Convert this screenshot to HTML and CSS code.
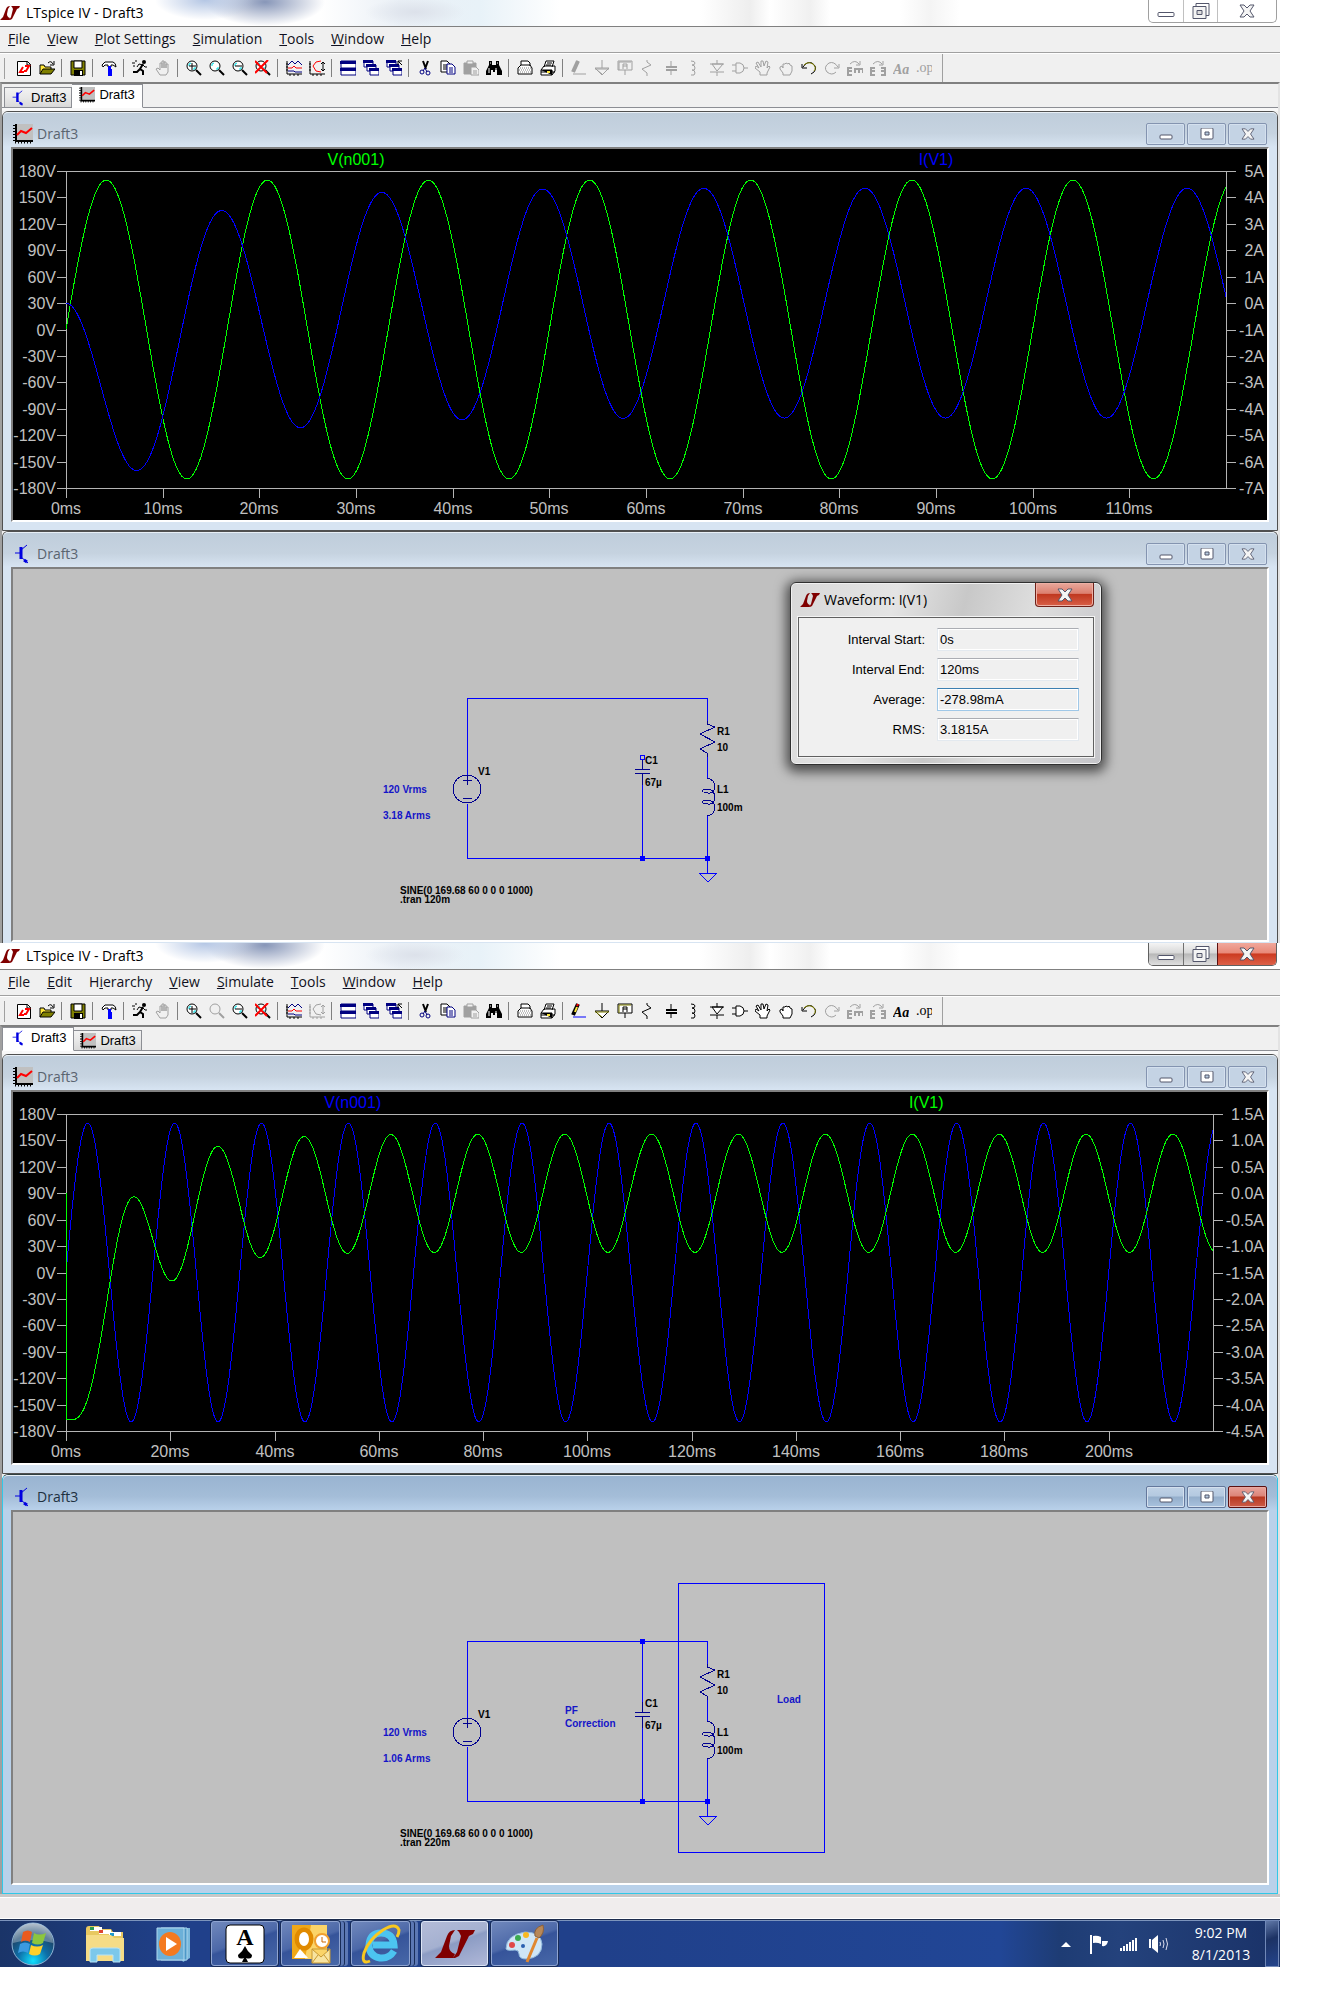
FILE: index.html
```html
<!DOCTYPE html>
<html lang="en">
<head>
    <meta charset="UTF-8">
    <meta name="viewport" content="width=device-width, initial-scale=1.0">
    <title>LTspice IV - Draft3</title>
    <link rel="stylesheet" href="styles.css">
</head>
<body>
    <!-- Shared icons -->
    <svg class="defs" aria-hidden="true">
        <symbol id="lt" viewBox="0 0 20 14"><path fill="#800000" d="M0 14l3-3 3-8q1-3 4-3L8 3 7 8q0 3 3 4l-1 2zM11 0h9l-1 2-2 1-3 6-2 4-2 1h-1l2-3 1-4 1-4-1-2z"/></symbol>
        <symbol id="bjt" viewBox="0 0 20 20"><path fill="none" stroke="#0000e0" stroke-width="1" d="M2 9h5M8 13l7 6M8 6l6-5"/><path fill="none" stroke="#0000e0" stroke-width="3" d="M8 3v12M11 16l3 2"/></symbol>
        <symbol id="wave" viewBox="0 0 20 20"><path fill="#c0c0c0" d="M3 0h17v16H3z"/><path stroke="#000" stroke-width="2" d="M3 0v17M2 17h18"/><path stroke="#000" stroke-width="3" stroke-dasharray="1 2" d="M1 1v18M2 18h18"/><path fill="none" stroke="#f00" stroke-width="2" d="M4 11l4-4 5 2 6-5"/></symbol>
        <symbol id="min" viewBox="0 0 18 16"><rect x="1" y="10" width="16" height="4" rx="1" fill="#fff" stroke="#53566b"/></symbol>
        <symbol id="restore" viewBox="0 0 18 16"><path fill="#fff" stroke="#53566b" d="M4 1h13v12H4z"/><path fill="#f4f4f4" stroke="#53566b" d="M1 4h13v12H1z"/><path fill="#ddd" stroke="#53566b" d="M5 8h5v4H5z"/></symbol>
        <symbol id="cmin" viewBox="0 0 14 12"><rect x="1" y="7" width="12" height="4" rx="1" fill="#fff" stroke="#53566b"/></symbol>
        <symbol id="cmax" viewBox="0 0 14 12"><rect x="1" y="0" width="12" height="11" rx="1" fill="#fff" stroke="#53566b"/><path fill="#b8cce0" stroke="#53566b" d="M5 4h4v3H5z"/></symbol>
        <symbol id="close" viewBox="0 0 16 14"><path fill="#f4f4f4" stroke="#53566b" stroke-linejoin="round" d="M1 1h4l3 3 3-3h4l-4 6 4 6h-4l-3-3-3 3H1l4-6z"/></symbol>

        <!-- Toolbar -->
        <symbol id="t-new" viewBox="0 0 16 16"><path fill="var(--paper)" stroke="var(--ink)" d="M1.500 1.500h10l3 3v11h-13z"/><path fill="none" stroke="var(--ink)" d="M11 1v4h4"/><path fill="none" stroke="var(--red)" stroke-width="2" d="M7 7L4 12h4M9 6h4l-3 5H8"/></symbol>
        <symbol id="t-open" viewBox="0 0 16 16"><path fill="var(--yellow)" stroke="var(--ink)" d="M1 14V5h4l1 2h6v3"/><path fill="var(--olive)" stroke="var(--ink)" d="M1 14l3-5h12l-4 5z"/><path fill="none" stroke="var(--ink)" d="M9 3q3-3 5 1M15 1v4h-4"/></symbol>
        <symbol id="t-save" viewBox="0 0 16 16"><path fill="var(--olive)" stroke="var(--ink)" d="M1 1h14v14H1z"/><path fill="var(--paper)" stroke="var(--ink)" d="M4 1h8v7H4z"/><path fill="var(--ink)" d="M4 10h9v6H4z"/><path fill="var(--paper)" d="M10 11h2v4h-2z"/></symbol>
        <symbol id="t-hammer" viewBox="0 0 16 16"><path fill="var(--paper)" stroke="var(--ink)" d="M1 5l3-3h8q3 1 3 5l-3-2h-2v2H7V5H4L2 7z"/><path fill="var(--blue)" d="M7 6h3v3h1v7H7z"/></symbol>
        <symbol id="t-run" viewBox="0 0 16 16"><circle cx="12" cy="2" r="2" fill="var(--ink)"/><path fill="none" stroke="var(--ink)" stroke-width="2" d="M11 4L8 9l3 2v4M8 9l-3 3H1"/><path fill="none" stroke="var(--ink)" d="M5 7l2-3 4 1 2 2h2M0 3h3M1 6h2M3 1h2"/></symbol>
        <symbol id="t-hand" viewBox="0 0 16 16"><path fill="var(--paper)" stroke="var(--ink)" d="M5 15l-4-6 2-1 2 2V3h2v5V1h2v7V2h2v6V4h2v8l-2 3z"/></symbol>
        <symbol id="lens" viewBox="0 0 16 16"><circle cx="6" cy="6" r="5" fill="var(--paper)" stroke="var(--ink)"/><path fill="none" stroke="var(--cyan)" d="M3 6V4l2-1M7 9h2V7"/><path stroke="var(--ink)" stroke-width="2" d="M10 10l5 5"/></symbol>
        <symbol id="t-zoomin" viewBox="0 0 16 16"><use href="#lens"/><path stroke="var(--ink)" d="M3 6h7M6 3v7"/></symbol>
        <symbol id="t-pan" viewBox="0 0 16 16"><use href="#lens"/></symbol>
        <symbol id="t-zoomout" viewBox="0 0 16 16"><use href="#lens"/><path stroke="var(--ink)" d="M3 6h7"/></symbol>
        <symbol id="t-zoomfit" viewBox="0 0 16 16"><use href="#lens"/><path stroke="var(--red)" stroke-width="2" d="M0 1l12 12M13 0L0 13"/></symbol>
        <symbol id="t-plot" viewBox="0 0 16 16"><path fill="none" stroke="var(--ink)" d="M1 1v13h15M0 4h2M0 7h2M0 10h2M4 14v2M8 14v2M12 14v2"/><path fill="none" stroke="var(--navy)" d="M2 5l4-4 3 3 3-3 4 4M2 11h6l1 1h7"/><path fill="none" stroke="var(--red)" d="M2 8h4l2-2 2 2h6"/></symbol>
        <symbol id="t-auto" viewBox="0 0 16 16"><path fill="none" stroke="var(--ink)" d="M1 1v13h15M0 4h2M0 7h2M0 10h2M4 14v2M8 14v2M12 14v2M14 2v9M12 4l2-2 2 2M12 9l2 2 2-2"/><path fill="none" stroke="var(--red)" d="M12 1L7 2 4 6l3 5 5 1"/></symbol>
        <symbol id="t-tile" viewBox="0 0 16 16"><path fill="var(--paper)" stroke="var(--navy)" d="M1 1h15v14H1zM1 8h15"/><path fill="var(--navy)" d="M0 1h16v3H0zM0 8h16v3H0z"/></symbol>
        <symbol id="win" viewBox="0 0 16 16"><path fill="var(--paper)" stroke="var(--navy)" d="M1 1h9v6H1z"/><path fill="var(--navy)" d="M0 0h10v3H0z"/></symbol>
        <symbol id="t-cascade" viewBox="0 0 16 16"><use href="#win" width="16" height="16"/><use href="#win" x="3" y="4" width="16" height="16"/><use href="#win" x="6" y="8" width="16" height="16"/></symbol>
        <symbol id="t-closeall" viewBox="0 0 16 16"><use href="#t-cascade"/><path fill="none" stroke="var(--ink)" d="M12 5V1h4M12 1l4 4"/></symbol>
        <symbol id="t-cut" viewBox="0 0 16 16"><path stroke="var(--ink)" stroke-width="2" d="M6 1l3 8M11 1L8 9"/><circle cx="5" cy="12" r="2" fill="none" stroke="var(--navy)"/><circle cx="11" cy="13" r="2" fill="none" stroke="var(--navy)"/><path stroke="var(--navy)" d="M8 8l-2 3M8 8l2 4"/></symbol>
        <symbol id="t-copy" viewBox="0 0 16 16"><path fill="var(--paper)" stroke="var(--ink)" d="M1 1h6l3 3v8H1zM3 5h4M3 7h4M3 9h4"/><path fill="var(--paper)" stroke="var(--navy)" d="M7 4h5l3 3v7H7zM9 8h4M9 10h4M9 12h4"/></symbol>
        <symbol id="t-paste" viewBox="0 0 16 16"><path fill="var(--olive)" stroke="var(--ink)" d="M1 3h12v11H1z"/><path fill="var(--paper)" stroke="var(--ink)" d="M4 1h6v3H4zM8 7h5l3 3v5H8zM10 11h4M10 13h4"/></symbol>
        <symbol id="t-find" viewBox="0 0 16 16"><path fill="var(--ink)" d="M3 1h3v4h4V1h3v4l3 6v4h-5v-5H9v2H7v-2H5v5H0v-4l3-6z"/><path stroke="var(--paper)" d="M3 8v5M10 8v2M4 3h1M11 3h1"/></symbol>
        <symbol id="t-setup" viewBox="0 0 16 16"><path fill="var(--paper)" stroke="var(--ink)" d="M4 5V1h7l2 2v3M1 8l3-3h9l2 3v6H1z"/><path stroke="var(--grey)" stroke-dasharray="1 1" d="M3 8h11M2 10h12M3 12h11"/></symbol>
        <symbol id="t-print" viewBox="0 0 16 16"><path fill="var(--paper)" stroke="var(--ink)" d="M4 7l2-6h8l-2 6M7 3h5M6 5h5M1 10l3-4h11v5l-3 4H1z"/><path stroke="var(--ink)" d="M1 10h11v5M1 12h14"/><path stroke="var(--yellow)" stroke-width="2" d="M7 12h3"/></symbol>
        <symbol id="t-wire" viewBox="0 0 16 16"><path stroke="var(--ink)" stroke-width="4" d="M7 1L2 12"/><path stroke="var(--yellow)" stroke-width="2" d="M6 4L4 9"/><path stroke="var(--red)" stroke-width="2" d="M7 1l-1 2"/><path stroke="var(--wire)" d="M2 14h13"/></symbol>
        <symbol id="t-gnd" viewBox="0 0 16 16"><path fill="var(--paper)" stroke="var(--ink)" d="M8 0v8M1 8h14l-7 7z"/><path stroke="var(--olive)" d="M1 9h14M3 10l5 4"/></symbol>
        <symbol id="t-label" viewBox="0 0 16 16"><path fill="var(--paper)" stroke="var(--ink)" d="M1 1h14v9H1zM8 10v5"/><path fill="none" stroke="var(--ink)" stroke-width="1" d="M6 9V4h4v5M6 6h4"/><path stroke="var(--olive)" d="M2 2h12M2 2v8"/></symbol>
        <symbol id="t-res" viewBox="0 0 16 16"><path fill="none" stroke="var(--ink)" d="M7 0v2l4 3-9 4 5 4v3"/></symbol>
        <symbol id="t-cap" viewBox="0 0 16 16"><path stroke="var(--ink)" stroke-width="1" d="M8 1v6M8 10v5"/><path stroke="var(--ink)" stroke-width="2" d="M3 7h11M3 10h11"/></symbol>
        <symbol id="t-ind" viewBox="0 0 16 16"><path fill="none" stroke="var(--ink)" d="M5 1q4 0 4 2t-3 2q3 0 3 3t-3 2q3 0 3 3t-4 2"/></symbol>
        <symbol id="t-diode" viewBox="0 0 16 16"><path fill="var(--paper)" stroke="var(--ink)" d="M8 0v4M1 4h14M3 4h11l-6 7zM1 12h14M8 12v4"/></symbol>
        <symbol id="t-gate" viewBox="0 0 16 16"><path fill="var(--paper)" stroke="var(--ink)" d="M4 3h4q4 1 4 5t-4 5H4zM0 5h4M0 11h4M12 8h4"/></symbol>
        <symbol id="t-move" viewBox="0 0 16 16"><path fill="var(--paper)" stroke="var(--ink)" d="M5 15v-3L0 8l1-2 3 2-3-5 2-1 3 5V1h2l1 5 2-5 2 1-1 6 2-2 1 1-3 6v2z"/></symbol>
        <symbol id="t-drag" viewBox="0 0 16 16"><path fill="var(--paper)" stroke="var(--ink)" d="M5 15v-2L2 9V7l2-1 1 2V4h2l1-1 2 1 1-1 1 2 2 1v5l-2 4z"/></symbol>
        <symbol id="t-undo" viewBox="0 0 16 16"><path fill="none" stroke="var(--ink)" d="M1 4v4h5M2 7q4-6 9-4 6 4 2 9l-3 2"/><path fill="none" stroke="var(--olive)" d="M3 5q4-4 9-1 4 4 1 7"/></symbol>
        <symbol id="t-redo" viewBox="0 0 16 16"><path fill="none" stroke="var(--ink)" d="M15 4v4h-5M14 7Q10 1 5 3q-6 4-2 9 5 4 9 0"/></symbol>
        <symbol id="t-rotate" viewBox="0 0 16 16"><path fill="none" stroke="var(--ink)" stroke-width="1" d="M3 4q5-5 9 0M13 1v4H9"/><path fill="none" stroke="var(--ink)" stroke-width="2" d="M5 8H1v7h4M1 11h4M8 13V9h8v4M12 9v4"/></symbol>
        <symbol id="t-mirror" viewBox="0 0 16 16"><path fill="none" stroke="var(--ink)" stroke-width="1" d="M3 4q5-5 9 0M13 1v4H9"/><path fill="none" stroke="var(--ink)" stroke-width="2" d="M5 8H1v7h4M1 11h4M11 8h4v7h-4M15 11h-4"/></symbol>

        <!-- Circuit parts that both drafts share -->
        <g id="circuit">
            <path class="wire" d="M454 206V129H694V155M454 235V289H694V247M694 188V209M629 215V289M694 289V304M686 304H704L695 313Z"/>
            <path class="junction" d="M627 287h5v5h-5zM692 287h5v5h-5z"/>
            <path class="part" d="M450 211h9M454 206v10M450 229h9"/>
            <path class="part" d="M622 200h15M622 204h15M629 190v10M629 204v12"/>
            <path class="part" d="M694 152v3l8 3-15 7 15 8-15 7 7 4v4"/>
            <circle class="part" cx="454" cy="220" r="14"/>
            <path class="part" d="M694 209Q702 211 702 218Q701 225 695 224Q689 223 689 222Q690 220 696 220Q702 222 702 229Q701 236 695 235Q689 235 689 233Q690 231 696 231Q702 233 702 239Q701 246 694 247"/>
        </g>
    </svg>

    <main class="desktop">
        <section class="app">
            <header class="titlebar">
                <svg class="app-icon"><use href="#lt"/></svg>
                <h1>LTspice IV - Draft3</h1>
                <div class="caption">
                    <button aria-label="Minimize"><svg><use href="#min"/></svg></button>
                    <button aria-label="Restore"><svg><use href="#restore"/></svg></button>
                    <button class="close" aria-label="Close"><svg><use href="#close"/></svg></button>
                </div>
            </header>
            <nav class="menubar">
                <button><u>F</u>ile</button>
                <button><u>V</u>iew</button>
                <button><u>P</u>lot Settings</button>
                <button><u>S</u>imulation</button>
                <button><u>T</u>ools</button>
                <button><u>W</u>indow</button>
                <button><u>H</u>elp</button>
            </nav>
            <div class="toolbar" data-disabled="hand paste wire gnd label res cap ind diode gate move drag redo rotate mirror text op"></div>
            <div class="mdi">
                <div class="tabs">
                    <button class="tab"><svg><use href="#bjt"/></svg>Draft3</button>
                    <button class="tab current"><svg><use href="#wave"/></svg>Draft3</button>
                </div>
                <article class="child">
                    <header class="child-title">
                        <svg class="child-icon"><use href="#wave"/></svg>
                        <h2>Draft3</h2>
                        <div class="child-caption">
                            <button aria-label="Minimize"><svg><use href="#cmin"/></svg></button>
                            <button aria-label="Maximize"><svg><use href="#cmax"/></svg></button>
                            <button aria-label="Close"><svg><use href="#close"/></svg></button>
                        </div>
                    </header>
                    <div class="pane"><svg class="plot" id="plot1"></svg></div>
                </article>
                <article class="child cut">
                    <header class="child-title">
                        <svg class="child-icon"><use href="#bjt"/></svg>
                        <h2>Draft3</h2>
                        <div class="child-caption">
                            <button aria-label="Minimize"><svg><use href="#cmin"/></svg></button>
                            <button aria-label="Maximize"><svg><use href="#cmax"/></svg></button>
                            <button aria-label="Close"><svg><use href="#close"/></svg></button>
                        </div>
                    </header>
                    <div class="pane">
                        <svg class="schematic">
                            <use href="#circuit"/>
                            <path class="wire" d="M627 186h4v4h-4z"/>
                            <text x="465" y="206">V1</text>
                            <text x="704" y="166">R1</text>
                            <text x="704" y="182">10</text>
                            <text x="632" y="195">C1</text>
                            <text x="632" y="217">67µ</text>
                            <text x="704" y="224">L1</text>
                            <text x="704" y="242">100m</text>
                            <text x="387" y="325">SINE(0 169.68 60 0 0 0 1000)</text>
                            <text x="387" y="334">.tran 120m</text>
                            <text class="note" x="370" y="224">120 Vrms</text>
                            <text class="note" x="370" y="250">3.18 Arms</text>
                        </svg>
                        <form class="dialog">
                            <div class="dialog-title">
                                <svg class="app-icon"><use href="#lt"/></svg>
                                <h3>Waveform: I(V1)</h3>
                                <button type="button" class="dialog-close" aria-label="Close"><svg><use href="#close"/></svg></button>
                            </div>
                            <div class="fields">
                                <label for="start">Interval Start:</label>
                                <input id="start" value="0s" readonly>
                                <label for="end">Interval End:</label>
                                <input id="end" value="120ms" readonly>
                                <label for="average">Average:</label>
                                <input id="average" class="hot" value="-278.98mA" readonly>
                                <label for="rms">RMS:</label>
                                <input id="rms" value="3.1815A" readonly>
                            </div>
                        </form>
                    </div>
                </article>
            </div>
        </section>

        <section class="app focused">
            <header class="titlebar">
                <svg class="app-icon"><use href="#lt"/></svg>
                <h1>LTspice IV - Draft3</h1>
                <div class="caption">
                    <button aria-label="Minimize"><svg><use href="#min"/></svg></button>
                    <button aria-label="Restore"><svg><use href="#restore"/></svg></button>
                    <button class="close" aria-label="Close"><svg><use href="#close"/></svg></button>
                </div>
            </header>
            <nav class="menubar">
                <button><u>F</u>ile</button>
                <button><u>E</u>dit</button>
                <button>H<u>i</u>erarchy</button>
                <button><u>V</u>iew</button>
                <button><u>S</u>imulate</button>
                <button><u>T</u>ools</button>
                <button><u>W</u>indow</button>
                <button><u>H</u>elp</button>
            </nav>
            <div class="toolbar" data-disabled="hand pan auto paste redo rotate mirror"></div>
            <div class="mdi">
                <div class="tabs">
                    <button class="tab current"><svg><use href="#bjt"/></svg>Draft3</button>
                    <button class="tab"><svg><use href="#wave"/></svg>Draft3</button>
                </div>
                <article class="child">
                    <header class="child-title">
                        <svg class="child-icon"><use href="#wave"/></svg>
                        <h2>Draft3</h2>
                        <div class="child-caption">
                            <button aria-label="Minimize"><svg><use href="#cmin"/></svg></button>
                            <button aria-label="Maximize"><svg><use href="#cmax"/></svg></button>
                            <button aria-label="Close"><svg><use href="#close"/></svg></button>
                        </div>
                    </header>
                    <div class="pane"><svg class="plot" id="plot2"></svg></div>
                </article>
                <article class="child active">
                    <header class="child-title">
                        <svg class="child-icon"><use href="#bjt"/></svg>
                        <h2>Draft3</h2>
                        <div class="child-caption">
                            <button aria-label="Minimize"><svg><use href="#cmin"/></svg></button>
                            <button aria-label="Maximize"><svg><use href="#cmax"/></svg></button>
                            <button class="close" aria-label="Close"><svg><use href="#close"/></svg></button>
                        </div>
                    </header>
                    <div class="pane">
                        <svg class="schematic">
                            <use href="#circuit"/>
                            <path class="wire" d="M629 129v61M665 71h146v269H665z"/>
                            <path class="junction" d="M627 127h5v5h-5z"/>
                            <text x="465" y="206">V1</text>
                            <text x="704" y="166">R1</text>
                            <text x="704" y="182">10</text>
                            <text x="632" y="195">C1</text>
                            <text x="632" y="217">67µ</text>
                            <text x="704" y="224">L1</text>
                            <text x="704" y="242">100m</text>
                            <text x="387" y="325">SINE(0 169.68 60 0 0 0 1000)</text>
                            <text x="387" y="334">.tran 220m</text>
                            <text class="note" x="370" y="224">120 Vrms</text>
                            <text class="note" x="370" y="250">1.06 Arms</text>
                            <text class="note" x="552" y="202">PF</text>
                            <text class="note" x="552" y="215">Correction</text>
                            <text class="note" x="764" y="191">Load</text>
                        </svg>
                    </div>
                </article>
            </div>
            <footer class="statusbar"></footer>
        </section>

        <footer class="taskbar">
            <button class="start" aria-label="Start">
                <svg viewBox="0 0 44 44">
                    <defs>
                        <radialGradient id="orb" cx="50%" cy="90%" r="90%"><stop offset="0" stop-color="#12e0ff"/><stop offset="0.400" stop-color="#0d6fa8"/><stop offset="0.700" stop-color="#1c4a70"/><stop offset="1" stop-color="#9ab"/></radialGradient>
                    </defs>
                    <circle cx="22" cy="22" r="21" fill="url(#orb)" stroke="#8fb4d4"/>
                    <path fill="#fff" opacity="0.300" d="M2 21a20 20 0 0 1 40 0q-20-6-40 0z"/>
                    <path fill="#ea5a1e" d="M12 10q5-3 9 0l-2 10q-5-3-9 0z"/>
                    <path fill="#8cc63e" d="M23 11q5 3 12 0l-3 10q-5 3-11 0z"/>
                    <path fill="#3a9ae0" d="M9 22q5-3 10 0l-2 9q-5-3-10 0z"/>
                    <path fill="#ffd02a" d="M20 23q6 3 12 0l-3 9q-5 3-11 0z"/>
                </svg>
            </button>
            <button class="task plain" aria-label="Windows Explorer">
                <svg viewBox="0 0 40 40">
                    <path fill="#e8c860" d="M1 5q0-3 3-3h10l2 3h10l2 3h10v28H1z"/>
                    <path fill="#fff" d="M5 3h12v4H5zM14 6h12v4H14zM24 8h12v4H24z"/>
                    <path fill="#2a9a50" d="M5 3h4v3H5z"/><path fill="#d43" d="M14 6h4v3h-4z"/><path fill="#29c" d="M25 9h4v3h-4z"/>
                    <path fill="#f5dc86" d="M1 11h25l3 3h10v23H1z"/>
                    <path fill="#7cc8ea" stroke="#b8e4f6" d="M5 38V26q0-2 3-2h24q3 0 3 2v12h-7v-7H12v7z"/>
                </svg>
            </button>
            <button class="task plain" aria-label="Windows Media Player">
                <svg viewBox="0 0 40 40">
                    <path fill="#7ab8dc" d="M10 4h25v30l-7 4z"/><path fill="#4d98c8" stroke="#a8d4ec" d="M6 4h26v32H6z"/>
                    <path fill="#6cb0d8" stroke="#b0d8ee" d="M2 4h27v32H2z"/>
                    <ellipse cx="15" cy="20" rx="11" ry="12" fill="#f47a20"/><path fill="#fff" d="M11 13l11 7-11 7z"/>
                </svg>
            </button>
            <button class="task" aria-label="Solitaire">
                <svg viewBox="0 0 40 40">
                    <rect x="1" y="1" width="38" height="38" rx="4" fill="#fff" stroke="#000"/>
                    <text class="card" x="20" y="21">A</text>
                    <path d="M20 22q2 5 7 9 0 5-6 3l2 4h-6l2-4q-6 2-6-3 5-4 7-9z"/>
                </svg>
            </button>
            <button class="task stacked" aria-label="Outlook">
                <svg viewBox="0 0 40 40">
                    <path fill="#f0a818" d="M1 1h35v34H1z"/><path fill="#fbd468" d="M20 1h16v34H14z"/>
                    <ellipse cx="13" cy="15" rx="7" ry="9" fill="none" stroke="#e08a00" stroke-width="5"/><ellipse cx="13" cy="15" rx="5" ry="7" fill="#fff"/>
                    <path fill="#fff" d="M3 34l6-9 8 9z"/>
                    <circle cx="31" cy="17" r="7" fill="#fff" stroke="#f0a030" stroke-width="2"/><path fill="none" stroke="#c60" d="M31 13v5h4"/>
                    <path fill="#f8e4a0" stroke="#c89830" d="M21 25h18v14H21zM21 25l9 8 9-8M21 39l6-8M39 39l-6-8"/>
                </svg>
            </button>
            <button class="task stacked" aria-label="Internet Explorer">
                <svg viewBox="0 0 40 40">
                    <path fill="none" stroke="#4cc4f0" stroke-width="7" d="M33 27Q28 35 19 34 8 32 8 21 9 9 20 9 32 9 33 21H12"/>
                    <path fill="none" stroke="#f8c820" stroke-width="3" d="M9 37Q0 41 3 29 8 15 22 6 35-2 38 6q0 4-2 7"/>
                </svg>
            </button>
            <button class="task current" aria-label="LTspice IV">
                <svg class="lt-big"><use href="#lt"/></svg>
            </button>
            <button class="task" aria-label="Paint">
                <svg viewBox="0 0 40 40">
                    <path fill="#cfe6f6" stroke="#8fb8dc" d="M20 8Q36 8 37 20q0 14-16 15-7 0-7-5 0-4-4-4-8 1-9-1 0-14 19-17z"/>
                    <circle cx="7" cy="21" r="3" fill="#e04848"/><circle cx="13" cy="14" r="3" fill="#3aaa50"/><circle cx="21" cy="11" r="3" fill="#f8b820"/><circle cx="18" cy="22" r="2" fill="#2a60b0"/>
                    <path stroke="#e08830" stroke-width="3" d="M32 14L22 38"/><path fill="#b88858" stroke="#8c6038" d="M30 12q-2-8 8-11 2 8-4 13z"/>
                </svg>
            </button>
            <div class="tray">
                <svg class="tray-icon arrow" viewBox="0 0 20 20"><path fill="#fff" d="M5 13l5-5 5 5z"/></svg>
                <svg class="tray-icon" viewBox="0 0 20 20"><path fill="#fff" d="M1 1h2v19H1zM4 2q4-1 8 1v7q-4-2-8-1zM13 7h6q-1 6-6 5z"/></svg>
                <svg class="tray-icon" viewBox="0 0 20 20"><path fill="#fff" d="M1 14h2v3H1zM4 12h2v5H4zM7 10h2v7H7zM10 8h2v9h-2zM13 6h2v11h-2zM16 4h2v13h-2z"/></svg>
                <svg class="tray-icon" viewBox="0 0 20 20"><path fill="#fff" d="M0 5h2v9H0zM3 6l6-5v18l-6-5z"/><path fill="none" stroke="#dde" d="M11 8q1 2 0 4M14 6q2 4 0 8M17 4q3 6 0 12"/></svg>
                <div class="clock"><span>9:02 PM</span><span>8/1/2013</span></div>
            </div>
            <button class="show-desktop" aria-label="Show desktop"></button>
        </footer>
    </main>

    <script src="app.js"></script>
</body>
</html>
```
FILE: styles.css
```css
* {
    margin: 0;
    padding: 0;
    box-sizing: border-box;
}

body {
    font-family: 'Open Sans', 'Noto Sans', sans-serif;
    font-size: 14px;
    line-height: 20px;
    color: #000;
    background: #fff;
}

button {
    font: inherit;
    color: inherit;
    background: none;
    border: none;
}

h1,
h2,
h3 {
    font-size: 14px;
    font-weight: normal;
}

svg {
    display: block;
    flex: none;
}

.defs {
    position: absolute;
    width: 0;
    height: 0;
}

.desktop {
    margin-right: 48px;
}

/* Main window */
.titlebar {
    display: flex;
    height: 27px;
    border-bottom: 1px solid #808080;
    background:
        radial-gradient(ellipse 50px 20px at 205px 0, #b4c6e4, transparent),
        radial-gradient(ellipse 60px 24px at 265px 2px, #8796b8, transparent),
        radial-gradient(ellipse 50px 14px at 415px 12px, #dce1ea, transparent),
        linear-gradient(to right, #fff 0, #fff 320px, #eaf0f6 400px, #e8f2f8 480px, #fff 560px, #fff 700px, #eee 750px, #fff 770px, #f0f0f0 810px, #fff 830px, #fff 900px, #f4f4f4 930px, #fff 960px, #fff);
}

.app-icon {
    width: 20px;
    height: 14px;
}

.titlebar .app-icon {
    margin-top: 6px;
}

.titlebar h1 {
    margin: 3px auto 0 6px;
}

.caption {
    display: flex;
    height: 23px;
    margin-right: 3px;
    border: 1px solid #a0a0a0;
    border-top: none;
    border-radius: 0 0 5px 5px;
    overflow: hidden;
}

.caption button {
    display: flex;
    justify-content: center;
    width: 34px;
    padding-top: 2px;
}

.caption button + button {
    border-left: 1px solid #c0c0c0;
}

.caption .close {
    width: 59px;
    padding-top: 4px;
}

.caption svg {
    width: 18px;
    height: 17px;
}

.caption .close svg {
    width: 16px;
    height: 14px;
}

.focused .caption {
    border-color: #606060;
}

.focused .caption button {
    background: linear-gradient(#f4f4f4, #d8d8d8 45%, #b8b8b8 50%, #dedede);
    border-color: #707070;
}

.focused .caption .close {
    background: linear-gradient(#f0a89c, #e88878 45%, #cc3a20 50%, #dc6048);
    border-color: #5c1010;
}

.menubar {
    display: flex;
    gap: 17px;
    height: 26px;
    padding: 0 8px 1px;
    background: #f0f0f0;
    border-bottom: 1px solid #a0a0a0;
}

.menubar button {
    color: #101020;
}

/* Toolbar */
.toolbar {
    --ink: #000;
    --paper: #fff;
    --red: #f00;
    --blue: #0000ff;
    --wire: #0000ff;
    --navy: #000080;
    --yellow: #ffe83c;
    --olive: #808000;
    --cyan: #00e0e8;
    --grey: #808080;
    display: flex;
    align-items: center;
    height: 29px;
    padding-left: 4px;
    background: #f0f0f0;
    border-top: 1px solid #fff;
}

.grip {
    width: 1px;
    height: 21px;
    margin-right: 7px;
    background: #a0a0a0;
}

.tool {
    display: flex;
    justify-content: center;
    width: 23px;
}

.tool svg {
    width: 16px;
    height: 16px;
}

.tool:disabled {
    --ink: #a0a0a0;
    --paper: #f0f0f0;
    --red: #a0a0a0;
    --blue: #a0a0a0;
    --wire: #a0a0a0;
    --navy: #a0a0a0;
    --yellow: #a0a0a0;
    --olive: #a0a0a0;
    --cyan: #f0f0f0;
}

.tool text {
    fill: var(--ink);
    font-family: 'Liberation Serif', serif;
    font-size: 14px;
}

.tool .italic {
    font-style: italic;
    font-weight: bold;
}

.sep {
    width: 1px;
    height: 18px;
    margin: 0 4px 0 3px;
    background: #808080;
}

.toolbar-end {
    align-self: stretch;
    width: 1px;
    margin-left: 7px;
    background: #a0a0a0;
}

/* Document area */
.mdi {
    border: 2px solid #a0a0a0;
    border-top-color: #808080;
    border-right-color: #e3e3e3;
    border-bottom: none;
    background: #f0f0f0;
}

.tabs {
    display: flex;
    align-items: flex-end;
    height: 27px;
    padding-left: 2px;
    border-bottom: 3px solid #f8f8f8;
    box-shadow: inset 0 -1px #8c8e94;
}

.tab {
    display: flex;
    align-items: center;
    gap: 4px;
    height: 21px;
    padding: 0 5px 0 6px;
    border: 1px solid #8c8e94;
    background: linear-gradient(#f2f2f2, #e8e8e8 50%, #d8d8d8);
    font-family: 'Liberation Sans', sans-serif;
    font-size: 13px;
}

.tab + .tab {
    border-left: none;
}

.tab svg {
    width: 16px;
    height: 16px;
}

.tab.current {
    height: 24px;
    padding: 0 7px 3px;
    background: #fff;
    border-bottom-color: #fff;
}

.focused .tabs {
    padding-left: 0;
}

.focused .tab.current {
    padding-left: 8px;
}

.child {
    padding: 0 8px 8px;
    border: 1px solid #505050;
    border-radius: 6px 6px 0 0;
    background: #d7e4f2;
}

.child-title {
    display: flex;
    align-items: center;
    gap: 4px;
    height: 35px;
    margin: 0 -8px;
    padding: 7px 10px 0;
    border-top: 1px solid #e8eff6;
    border-radius: 5px 5px 0 0;
    background: linear-gradient(#bfcddb, #c6d3e0 60%, #d7e4f2);
}

.child-icon {
    width: 20px;
    height: 20px;
}

.child-title h2 {
    margin-right: auto;
    color: #5a6470;
}

.child-caption {
    display: flex;
    gap: 2px;
}

.child-caption button {
    display: flex;
    align-items: center;
    justify-content: center;
    width: 39px;
    height: 22px;
    border: 1px solid #8494b0;
    border-radius: 2px;
    background: #c4d3e4;
    box-shadow: inset 0 0 0 1px #d4e0ee;
}

.child-caption svg {
    width: 14px;
    height: 12px;
}

.pane {
    position: relative;
    height: 375px;
    border: 2px solid;
    border-color: #808080 #fff #fff #808080;
    background: #c0c0c0;
}

.child.cut {
    padding-bottom: 1px;
    border-bottom: none;
}

.child.active {
    border-color: #30c8e8;
    border-top-color: #304040;
    box-shadow: 0 1px #000;
    background: #b9d1ea;
}

.active .child-title {
    background: linear-gradient(#99b4d1, #a4bdd8 60%, #b9d1ea);
}

.active .child-title h2 {
    color: #203040;
}

.active .child-caption button {
    border-color: #64789c;
    background: linear-gradient(#c0d2e6, #b4c9e0 45%, #94aecb 50%, #a8c2de);
}

.active .child-caption .close {
    border-color: #5c1010;
    background: linear-gradient(#e8a49c, #dc8478 45%, #b83820 50%, #cc5c48);
    box-shadow: inset 0 0 0 1px #e8a8a0;
}

/* Waveforms */
.plot {
    width: 100%;
    height: 100%;
    background: #000;
    font-family: 'Liberation Sans', sans-serif;
    font-size: 16px;
    shape-rendering: crispEdges;
}

.plot text {
    fill: #c0c0c0;
    text-anchor: middle;
}

.plot .left,
.plot .right {
    text-anchor: end;
}

.plot .axis {
    fill: none;
    stroke: #b4b4b4;
}

.plot .trace {
    fill: none;
}

.plot .green {
    stroke: #00ff00;
}

.plot .blue {
    stroke: #0000ff;
}

.plot text.green {
    fill: #00ff00;
    stroke: none;
}

.plot text.blue {
    fill: #0000ff;
    stroke: none;
}

/* Schematics */
.schematic {
    width: 100%;
    height: 100%;
    font-family: 'Liberation Sans', sans-serif;
    font-size: 10px;
    font-weight: bold;
}

.wire,
.part {
    fill: none;
    stroke: #0000ff;
    shape-rendering: crispEdges;
}

.part {
    stroke: #000090;
}

.junction {
    fill: #0000ff;
    shape-rendering: crispEdges;
}

.note {
    fill: #1414c8;
}

/* Waveform summary, floats over the schematic */
.dialog {
    position: absolute;
    left: 777px;
    top: 13px;
    width: 312px;
    padding: 0 7px 7px;
    border: 1px solid #303030;
    border-radius: 6px;
    background: linear-gradient(105deg, #d8d8d8, #e4e4e4 30%, #c8c8c8 50%, #dedede 70%, #c4c4c8);
    box-shadow: inset 0 0 0 1px #f0f0f0, 0 3px 12px 4px rgba(0, 0, 0, 0.6);
}

.dialog-title {
    display: flex;
    align-items: center;
    gap: 4px;
    height: 34px;
    padding-left: 2px;
}

.dialog-title h3 {
    margin-right: auto;
}

.dialog-close {
    display: flex;
    align-self: flex-start;
    align-items: center;
    justify-content: center;
    width: 59px;
    height: 24px;
    border: 1px solid #702018;
    border-top: none;
    border-radius: 0 0 4px 4px;
    background: linear-gradient(#e8a89c, #dc8070 45%, #c03820 50%, #d86048);
    box-shadow: inset 0 0 0 1px #eeb0a4;
}

.dialog-close svg {
    width: 16px;
    height: 14px;
}

.fields {
    display: grid;
    grid-template-columns: 126px 142px;
    gap: 7px 12px;
    padding: 10px 0 15px;
    border: 1px solid #606060;
    background: #f0f0f0;
    box-shadow: 0 0 0 1px #f4f4f4;
    font-family: 'Liberation Sans', sans-serif;
    font-size: 13px;
}

.fields label {
    padding-top: 2px;
    text-align: right;
}

.fields input {
    width: 142px;
    height: 23px;
    padding: 0 2px 1px;
    border: 1px solid #e3e9ef;
    border-top-color: #abadb3;
    background: #f0f0f0;
    box-shadow: inset 0 0 0 1px #fff;
    font: inherit;
}

.fields .hot {
    border-color: #a0c8e8;
    border-top-color: #3c7fb1;
}

.statusbar {
    height: 25px;
    border-top: 3px solid #c8c8c8;
    border-bottom: 1px solid #fff;
    background: #f0eded;
    box-shadow: inset 0 1px #fff;
}

/* Taskbar */
.taskbar {
    display: flex;
    height: 48px;
    padding-right: 1px;
    border-top: 1px solid #1c2c4c;
    box-shadow: inset 0 1px #7c94bc;
    background: linear-gradient(to right, #1a3468, #20408a 180px, #20408a 600px, #214696 1000px, #1e3c74 1060px, #24427c 1120px, #1a3268);
}

.taskbar button {
    display: flex;
    align-items: center;
    justify-content: center;
}

.start {
    width: 66px;
}

.start svg {
    width: 44px;
    height: 44px;
}

.task {
    position: relative;
    width: 67px;
    margin: 1px 3px 1px 0;
    border: 1px solid #8fa4d0;
    border-radius: 3px;
    background: linear-gradient(160deg, #7088bc, #4c68a8 45%, #36549a 50%, #4868a8);
    box-shadow: 0 0 0 1px #182c58;
}

.task svg {
    width: 40px;
    height: 40px;
}

.task.plain {
    border-color: transparent;
    background: none;
    box-shadow: none;
}

.start + .task {
    margin-left: 5px;
}

.task.stacked {
    width: 59px;
    margin-right: 11px;
    box-shadow: 0 0 0 1px #182c58, 4px 0 #5c78b4, 5px 0 #182c58, 8px 0 #5c78b4;
}

.task.current {
    border-color: #dce4f4;
    background: linear-gradient(160deg, #b4bcd8, #a4b0d0 45%, #8c9cc4 50%, #b0b8d8);
}

.task .lt-big {
    width: 40px;
    height: 28px;
}

.card {
    font-family: 'Liberation Serif', serif;
    font-size: 24px;
    font-weight: bold;
    text-anchor: middle;
}

.tray {
    display: flex;
    align-items: center;
    gap: 10px;
    margin-left: auto;
}

.tray-icon {
    width: 20px;
    height: 20px;
}

.tray-icon.arrow {
    margin-right: 3px;
}

.clock {
    display: flex;
    flex-direction: column;
    width: 76px;
    margin-left: 4px;
    color: #fff;
    line-height: 22px;
    text-align: center;
}

.show-desktop {
    width: 14px;
    margin-left: 6px;
    border: 1px solid #7088b8;
    background: linear-gradient(160deg, #6078a8, #1c3264 40%, #24448c);
}
```
FILE: app.js
```js
// Toolbar: groups of buttons, a separator between groups
const TOOLS = [
    ['new', 'open'],
    ['save'],
    ['hammer'],
    ['run', 'hand'],
    ['zoomin', 'pan', 'zoomout', 'zoomfit'],
    ['plot', 'auto'],
    ['tile', 'cascade', 'closeall'],
    ['cut', 'copy', 'paste', 'find'],
    ['setup', 'print'],
    ['wire', 'gnd', 'label', 'res', 'cap', 'ind', 'diode', 'gate', 'move', 'drag', 'undo', 'redo', 'rotate', 'mirror', 'text', 'op']
];

const TEXT_TOOLS = {
    text: '<text class="italic" x="0" y="14">Aa</text>',
    op: '<text x="0" y="12">.op</text>'
};

function renderToolbar(bar) {
    const disabled = bar.dataset.disabled.split(' ');
    const groups = TOOLS.map(group => group.map(name => {
        const icon = TEXT_TOOLS[name] || `<use href="#t-${name}"/>`;
        const state = disabled.includes(name) ? ' disabled' : '';
        return `<button class="tool" aria-label="${name}"${state}><svg viewBox="0 0 16 16">${icon}</svg></button>`;
    }).join(''));
    bar.innerHTML = '<span class="grip"></span>' + groups.join('<span class="sep"></span>') + '<span class="toolbar-end"></span>';
}

// Circuit: 120 Vrms 60 Hz source, 10 ohm + 100 mH load, 67 uF capacitor
const OMEGA = 2 * Math.PI * 60;
const VPEAK = 169.68;
const R = 10;
const L = 0.1;
const C = 67e-6;

function voltage(t) {
    return VPEAK * Math.sin(OMEGA * t);
}

function loadCurrent(t) {
    const phase = Math.atan2(OMEGA * L, R);
    const peak = VPEAK / Math.hypot(R, OMEGA * L);
    return -peak * (Math.sin(OMEGA * t - phase) + Math.sin(phase) * Math.exp(-t * R / L));
}

function correctedCurrent(t) {
    return t === 0 ? 0 : loadCurrent(t) - VPEAK * OMEGA * C * Math.cos(OMEGA * t);
}

const PLOTS = [
    {
        id: 'plot1', span: 120, step: 10, right: 41,
        amps: [5, -7], ampStep: 1, digits: 0,
        traces: [
            { name: 'V(n001)', color: 'green', f: voltage, range: [180, -180] },
            { name: 'I(V1)', color: 'blue', f: loadCurrent, range: [5, -7] }
        ]
    },
    {
        id: 'plot2', span: 220, step: 20, right: 54,
        amps: [1.5, -4.5], ampStep: 0.5, digits: 1,
        traces: [
            { name: 'V(n001)', color: 'blue', f: voltage, range: [180, -180] },
            { name: 'I(V1)', color: 'green', f: correctedCurrent, range: [1.5, -4.5] }
        ]
    }
];

const TOP = 22;
const BOTTOM = 339;
const LEFT = 53;

function drawPlot(plot) {
    const svg = document.getElementById(plot.id);
    const right = svg.clientWidth - plot.right;
    const width = right - LEFT;
    const height = BOTTOM - TOP;
    let axis = `M${LEFT} ${TOP}V${BOTTOM}M${right} ${TOP}V${BOTTOM}M${LEFT} ${TOP}H${right}M${LEFT} ${BOTTOM}H${right}`;
    let out = '';

    // both vertical axes have 12 divisions
    for (let i = 0; i <= 12; i++) {
        const y = Math.round(TOP + height * i / 12);
        axis += `M${LEFT - 9} ${y}h9M${right} ${y}h10`;
        const amp = (plot.amps[0] - i * plot.ampStep).toFixed(plot.digits);
        out += `<text class="left" x="${LEFT - 10}" y="${y + 6}">${180 - 30 * i}V</text>`;
        out += `<text class="right" x="${svg.clientWidth - 3}" y="${y + 6}">${amp}A</text>`;
    }
    for (let ms = 0; ms < plot.span; ms += plot.step) {
        const x = Math.round(LEFT + width * ms / plot.span);
        axis += `M${x} ${BOTTOM}v10`;
        out += `<text x="${x}" y="${BOTTOM + 26}">${ms}ms</text>`;
    }
    out += `<path class="axis" d="${axis}"/>`;

    plot.traces.forEach((trace, n) => {
        const [hi, lo] = trace.range;
        const points = [];
        for (let i = 0; i <= width; i++) {
            const value = trace.f(i / width * plot.span / 1000);
            points.push(`${LEFT + i},${(TOP + (hi - value) / (hi - lo) * height).toFixed(1)}`);
        }
        out += `<polyline class="trace ${trace.color}" points="${points.join(' ')}"/>`;
        out += `<text class="${trace.color}" x="${LEFT + width * (n * 2 + 1) / 4}" y="16">${trace.name}</text>`;
    });
    svg.innerHTML = out;
}

document.querySelectorAll('.toolbar').forEach(renderToolbar);
PLOTS.forEach(drawPlot);
window.addEventListener('resize', () => PLOTS.forEach(drawPlot));
```
